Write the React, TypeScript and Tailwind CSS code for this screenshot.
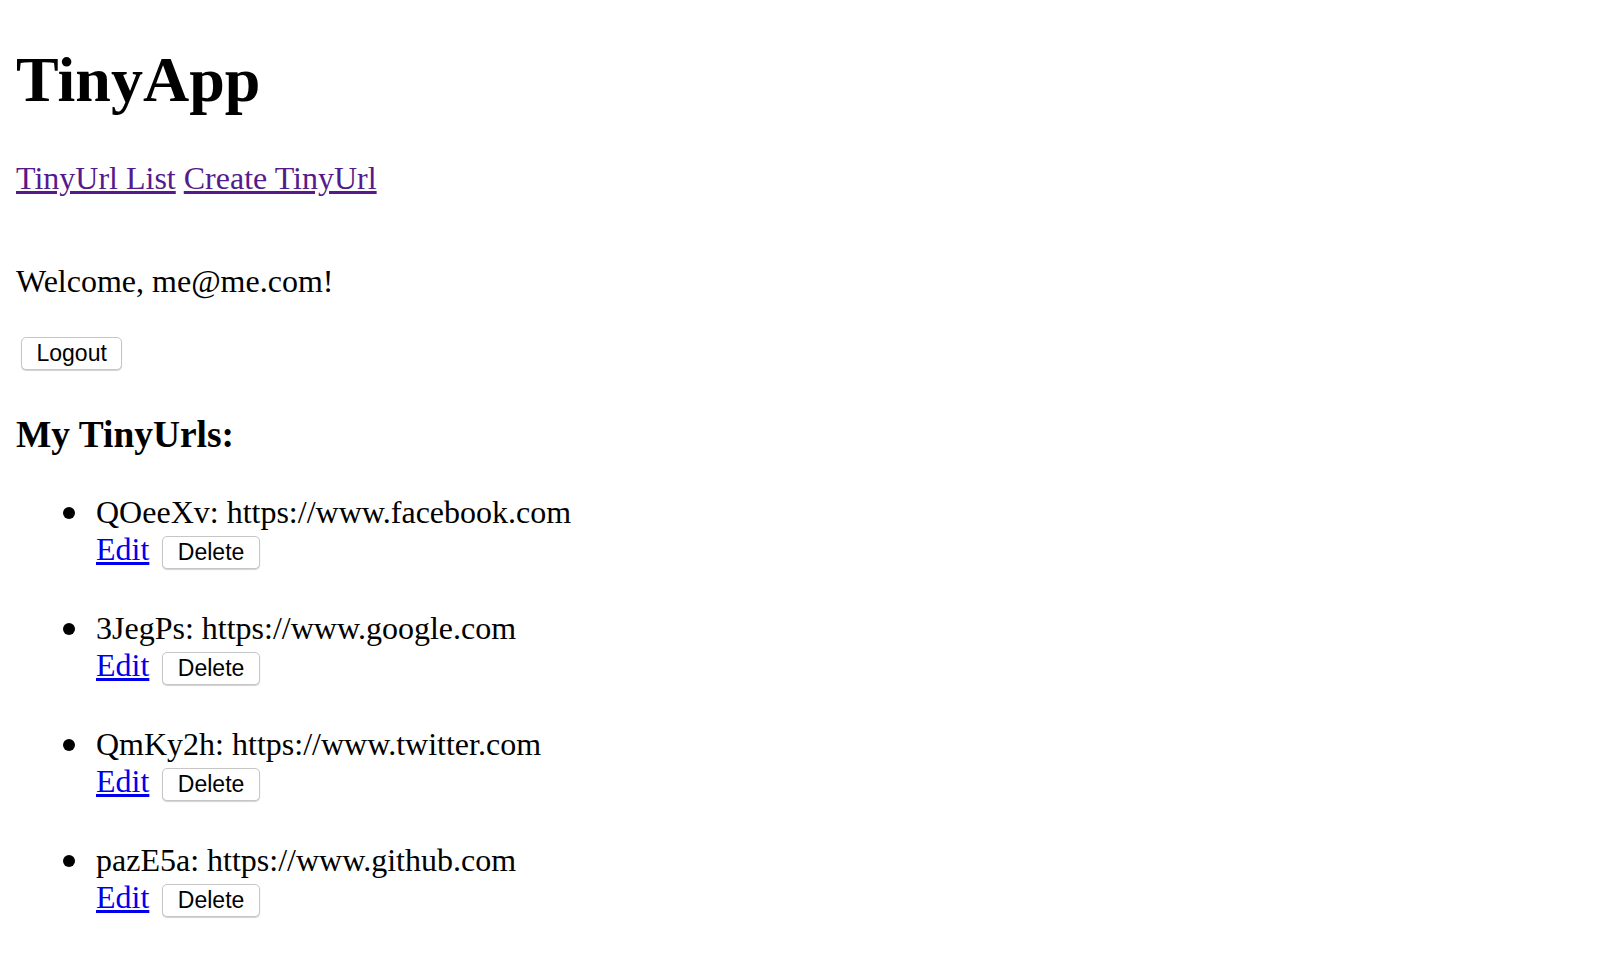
import React from "react";

const urls = [
  { id: "QOeeXv", long: "https://www.facebook.com" },
  { id: "3JegPs", long: "https://www.google.com" },
  { id: "QmKy2h", long: "https://www.twitter.com" },
  { id: "pazE5a", long: "https://www.github.com" },
];

function NativeButton({ children }: { children: React.ReactNode }) {
  return (
    <button className="ml-[5px] inline-block h-[33px] rounded-[5px] border border-[#c6c6c6] bg-white px-[14.5px] align-baseline font-['Liberation_Sans',Arial,sans-serif] text-[23px] leading-[normal] text-black shadow-[0_1px_1px_rgba(0,0,0,0.18)]">
      {children}
    </button>
  );
}

export default function App() {
  return (
    <div className="min-h-screen bg-white px-[16px] pt-[43px] font-['Liberation_Serif','Times_New_Roman',serif] text-[32px] leading-[normal] text-black">
      <h1 className="text-[64px] font-bold leading-[normal]">TinyApp</h1>

      <div className="mt-[43px]">
        <a href="#" className="text-[#551a8b] underline">
          TinyUrl List
        </a>{" "}
        <a href="#" className="text-[#551a8b] underline">
          Create TinyUrl
        </a>
      </div>

      <p className="mt-[66px]">Welcome, me@me.com!</p>

      <div className="mt-[37px] flex">
        <NativeButton>Logout</NativeButton>
      </div>

      <h3 className="mt-[43px] text-[37.44px] font-bold leading-[normal]">
        My TinyUrls:
      </h3>

      <ul className="mt-[38px] list-none pl-[80px]">
        {urls.map((u) => (
          <li key={u.id} className="mb-[41px]">
            <div className="h-[37px]">
              <span className="-ml-[33px] mr-[21px] inline-block size-[12px] rounded-full bg-black align-[4px]" />
              {u.id}: {u.long}
            </div>
            <div className="h-[38px]">
              <a href="#" className="text-[#0000ee] underline">
                Edit
              </a>{" "}
              <NativeButton>Delete</NativeButton>
            </div>
          </li>
        ))}
      </ul>
    </div>
  );
}
